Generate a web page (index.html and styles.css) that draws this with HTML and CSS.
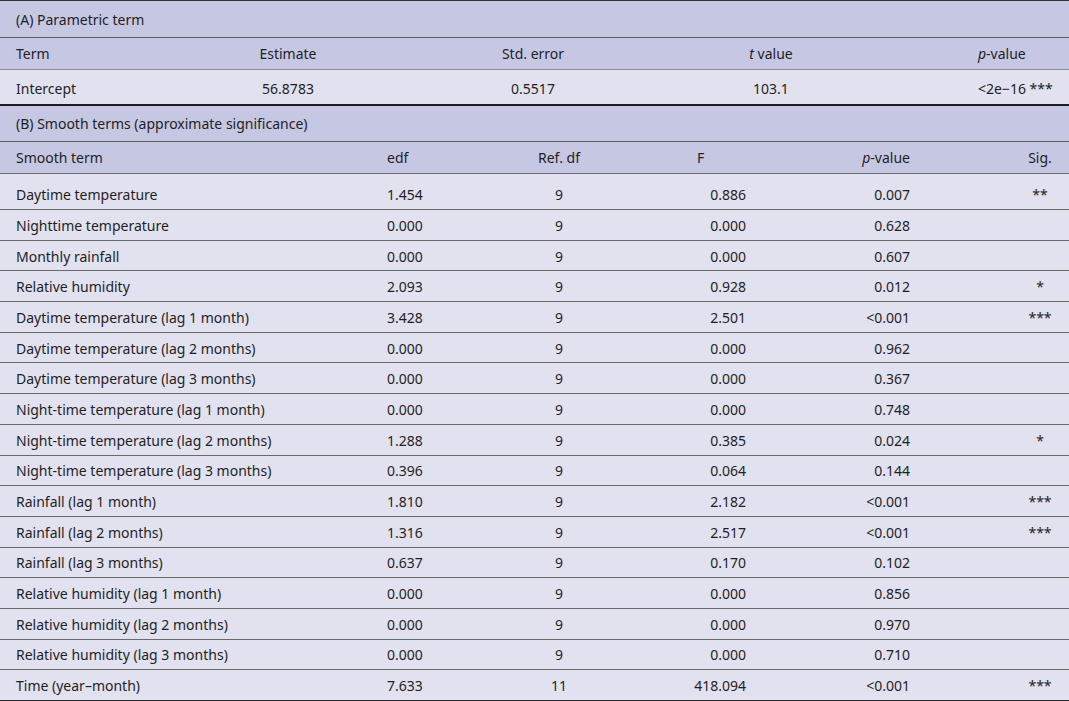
FILE: index.html
```html
<!DOCTYPE html>
<html lang="en">
<head>
<meta charset="utf-8">
<title>GAM summary</title>
<link rel="stylesheet" href="styles.css">
</head>
<body>
<div class="table">
  <section class="sec sec-a">
    <div class="title">(A) Parametric term</div>
    <div class="row head grid-a">
      <div class="c1">Term</div>
      <div class="ctr">Estimate</div>
      <div class="ctr">Std. error</div>
      <div class="ctr"><i>t</i> value</div>
      <div class="pa"><i>p</i>-value</div>
    </div>
    <div class="row body grid-a">
      <div class="c1">Intercept</div>
      <div class="ctr">56.8783</div>
      <div class="ctr">0.5517</div>
      <div class="ctr">103.1</div>
      <div class="pa">&lt;2e−16 ***</div>
    </div>
  </section>
  <section class="sec sec-b">
    <div class="title">(B) Smooth terms (approximate significance)</div>
    <div class="row head grid-b">
      <div class="c1">Smooth term</div>
      <div class="edf">edf</div>
      <div class="ctr">Ref. df</div>
      <div class="fh">F</div>
      <div class="pv"><i>p</i>-value</div>
      <div class="sig">Sig.</div>
    </div>
    <div id="rows"></div>
  </section>
</div>
<script src="app.js"></script>
</body>
</html>
```

FILE: app.js
```js
const data = [
  ["Daytime temperature","1.454","9","0.886","0.007","**"],
  ["Nighttime temperature","0.000","9","0.000","0.628",""],
  ["Monthly rainfall","0.000","9","0.000","0.607",""],
  ["Relative humidity","2.093","9","0.928","0.012","*"],
  ["Daytime temperature (lag 1 month)","3.428","9","2.501","<0.001","***"],
  ["Daytime temperature (lag 2 months)","0.000","9","0.000","0.962",""],
  ["Daytime temperature (lag 3 months)","0.000","9","0.000","0.367",""],
  ["Night-time temperature (lag 1 month)","0.000","9","0.000","0.748",""],
  ["Night-time temperature (lag 2 months)","1.288","9","0.385","0.024","*"],
  ["Night-time temperature (lag 3 months)","0.396","9","0.064","0.144",""],
  ["Rainfall (lag 1 month)","1.810","9","2.182","<0.001","***"],
  ["Rainfall (lag 2 months)","1.316","9","2.517","<0.001","***"],
  ["Rainfall (lag 3 months)","0.637","9","0.170","0.102",""],
  ["Relative humidity (lag 1 month)","0.000","9","0.000","0.856",""],
  ["Relative humidity (lag 2 months)","0.000","9","0.000","0.970",""],
  ["Relative humidity (lag 3 months)","0.000","9","0.000","0.710",""],
  ["Time (year–month)","7.633","11","418.094","<0.001","***"]
];
const host = document.getElementById("rows");
const cls = ["c1","edf","ctr","fd","pv","sig"];
data.forEach((r, i) => {
  const row = document.createElement("div");
  row.className = "row body grid-b" + (i === 0 ? " first" : "");
  r.forEach((v, j) => {
    const c = document.createElement("div");
    c.className = cls[j];
    c.textContent = v;
    row.appendChild(c);
  });
  host.appendChild(row);
});
```

FILE: styles.css
```css
html, body {
  margin: 0;
  padding: 0;
  background: #ffffff;
}
body {
  font-family: "Noto Sans", "Open Sans", sans-serif;
  font-size: 14px;
  color: #1f1f1f;
}
.table {
  width: 1069px;
  border-top: 1px solid #333;
  border-bottom: 2px solid #2a2a2a;
}
.sec-a {
  border-bottom: 2px solid #1e1e1e;
}
.title {
  background: #c6c7e3;
  height: 36px;
  display: flex;
  align-items: center;
  padding-left: 16px;
  border-bottom: 1px solid #5a5a5a;
}
.sec-b .title {
  height: 35px;
}
.row {
  display: grid;
  align-items: center;
}
.row > div {
  white-space: nowrap;
}
.head {
  background: #c6c7e3;
  height: 31px;
}
.sec-a .head {
  border-bottom: 1px solid #8c8c8c;
}
.sec-b .head {
  border-bottom: 1px solid #6a6a6a;
}
.body {
  background: #e1e1f0;
}
.sec-a .body {
  height: 34px;
  padding-top: 2px;
  box-sizing: border-box;
}
.grid-a {
  grid-template-columns: 200px 176px 314px 162px 217px;
}
.grid-b {
  grid-template-columns: 371px 109px 158px 124px 164px 143px;
}
.sec-b .body {
  height: 30.7px;
  box-sizing: border-box;
  border-top: 1px solid #6a6a6a;
  padding-top: 1px;
}
.sec-b .body.first {
  height: 35px;
  border-top: 0;
  padding-top: 6px;
}
.c1 { padding-left: 16px; }
.ctr { text-align: center; }
.pa { padding-left: 126px; }
.edf { padding-left: 16px; }
.fh { padding-left: 59px; }
.fd { text-align: right; padding-right: 16px; }
.pv { text-align: right; padding-right: 16px; }
.sig { text-align: center; padding-left: 85px; }
```
